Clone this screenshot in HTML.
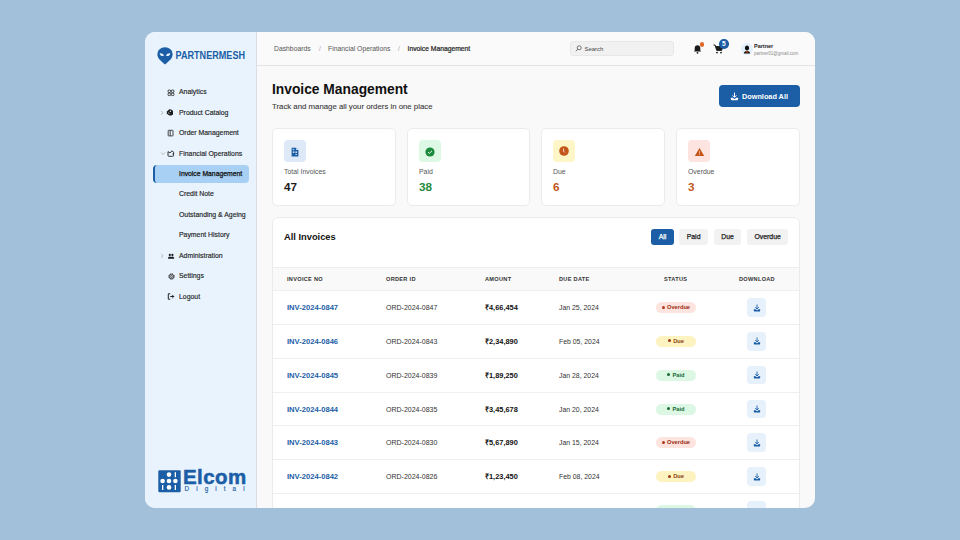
<!DOCTYPE html>
<html><head><meta charset="utf-8">
<style>
*{box-sizing:border-box;margin:0;padding:0}
html,body{width:960px;height:540px;overflow:hidden;background:#a3c0da;font-family:"Liberation Sans",sans-serif;color:#1b1b1b}
.frame{position:absolute;left:145px;top:32px;width:670px;height:476px;border-radius:10px;overflow:hidden;background:#f9f9f9}
.side{position:absolute;left:0;top:0;width:112px;height:476px;background:#e8f3fd;border-right:1px solid #d9dee4}
.abs{position:absolute;white-space:nowrap}
.logo-t{left:30.5px;top:17px;font-size:9.1px;font-weight:700;color:#1b5ea6;line-height:14px;letter-spacing:0;transform:scaleY(1.12);transform-origin:0 100%}
.nav{left:34px;font-size:6.9px;color:#1e1e1e;line-height:10px;-webkit-text-stroke:0.15px #1e1e1e}
.ico{left:21px;width:8px;height:8px}
.chev{left:14px;font-size:6px;color:#888}
.active{position:absolute;left:8px;top:133px;width:96px;height:18px;background:#a8d0f4;border-radius:4px;border-left:2px solid #1b5ea6}
.hdr{position:absolute;left:112px;top:0;width:558px;height:34px;border-bottom:1px solid #e3e3e3;background:#fafafa}
.bc{top:12px;font-size:6.8px;color:#555;line-height:10px}
.main{position:absolute;left:112px;top:34px;width:558px;height:442px}
.card{position:absolute;background:#fff;border:1px solid #ebebeb;border-radius:6px}
.stat{top:62px;width:124px;height:78px;border-radius:5px}
.sico{position:absolute;left:11px;top:11px;width:22px;height:22px;border-radius:4px}
.slab{left:11px;top:38px;font-size:6.9px;color:#555;line-height:10px}
.sval{left:11px;top:51px;font-size:11.7px;font-weight:700;line-height:14px}
.btn{position:absolute;border-radius:3px;font-size:6.9px;font-weight:400;-webkit-text-stroke:0.25px currentColor;text-align:center;line-height:16px;height:16px;top:11px}
.th{top:0;font-size:5.6px;font-weight:700;color:#333;letter-spacing:0.3px;line-height:23px}
.row{position:absolute;left:0;width:528px;height:34px;border-top:1px solid #efefef}
.inv{left:14px;font-size:7.6px;font-weight:700;color:#1b5ea6;line-height:33px}
.ord{left:113px;font-size:7px;color:#333;line-height:33px}
.amt{left:212px;font-size:7.4px;font-weight:700;color:#111;line-height:33px}
.dd{left:286px;font-size:6.9px;color:#333;line-height:33px}
.pill{position:absolute;left:383px;top:11px;width:40px;height:11px;border-radius:6px;font-size:5.7px;font-weight:700;line-height:11px;text-align:center}
.pill i{display:inline-block;width:3px;height:3px;border-radius:50%;vertical-align:middle;margin-right:2px;margin-top:-1px}
.dl{position:absolute;left:474.3px;top:7px;width:18.5px;height:18.7px;border-radius:4px;background:#e6f1fc}
</style></head><body>
<div class="frame">
  <div class="side">
    <svg class="abs" style="left:12px;top:14.5px" width="16" height="18" viewBox="0 0 16 18">
      <path d="M8 0.3C3.8 0.3 0.4 3.4 0.4 7.5c0 3.6 3.6 6.8 7.6 9.9 4-3.1 7.6-6.3 7.6-9.9C15.6 3.4 12.2 0.3 8 0.3z" fill="#1b5ea6"/>
      <path d="M2.6 6.4c1.9-.2 3.6.6 4.3 2.2-.6.6-1.5.6-2.3.3C3.6 8.5 3 7.6 2.6 6.4zM13.4 6.4c-1.9-.2-3.6.6-4.3 2.2.6.6 1.5.6 2.3.3 1-.4 1.6-1.3 2-2.5z" fill="#e8f3fd"/>
    </svg>
    <div class="abs logo-t">PARTNERMESH</div>

    <div class="active"></div>

    <svg class="abs" style="left:21.5px;top:56.5px" width="8" height="8" viewBox="0 0 8 8" fill="none" stroke="#222" stroke-width="0.85"><rect x="1" y="1" width="2.7" height="2.5" rx="1"/><rect x="4.3" y="1" width="2.7" height="2.5" rx="1"/><rect x="1" y="4.1" width="2.7" height="2.5" rx="1"/><rect x="4.3" y="4.1" width="2.7" height="2.5" rx="1"/></svg>
    <svg class="abs" style="left:15px;top:77px" width="5" height="8" viewBox="0 0 5 8" fill="none" stroke="#aaa" stroke-width="0.8"><path d="M1.2 1.9L2.9 3.9 1.2 5.9"/></svg>
    <svg class="abs" style="left:21px;top:76px" width="8" height="8" viewBox="0 0 8 8"><path d="M0.8 3.4L3.4 1.2 5.2 1.6 7 3V6.6L5.4 7.4 3.4 7.6 0.8 5.8z" fill="#1a1a1a"/><circle cx="4.4" cy="3.2" r="0.75" fill="#dfe8f0"/><path d="M1.9 4.6l1.7 1" stroke="#cfd8e0" stroke-width="0.8"/></svg>
    <svg class="abs" style="left:22px;top:97px" width="7" height="8" viewBox="0 0 7 8" fill="none" stroke="#333" stroke-width="0.9"><rect x="1.2" y="1.3" width="4.8" height="5.6" rx="0.4"/><path d="M3.2 1.5v5.2"/></svg>
    <svg class="abs" style="left:14.5px;top:119px" width="6" height="5" viewBox="0 0 6 5" fill="none" stroke="#aaa" stroke-width="0.8"><path d="M1 1.5L3 3.5 5 1.5"/></svg>
    <svg class="abs" style="left:21.5px;top:118px" width="8" height="7" viewBox="0 0 8 7" fill="none" stroke="#222" stroke-width="0.9"><path d="M1 1.6L3 3 4.8 0.9 6 1.6a.9.9 0 0 1 .6.9V5.4a.9.9 0 0 1-.9.9H1.9a.9.9 0 0 1-.9-.9z"/><circle cx="6" cy="3.9" r="0.55" fill="#222" stroke="none"/></svg>
    <svg class="abs" style="left:15px;top:220px" width="5" height="8" viewBox="0 0 5 8" fill="none" stroke="#aaa" stroke-width="0.8"><path d="M1.2 1.9L2.9 3.9 1.2 5.9"/></svg>
    <svg class="abs" style="left:22px;top:220.5px" width="8" height="7" viewBox="0 0 8 7" fill="#1a1a1a"><circle cx="2.8" cy="1.9" r="1.1"/><circle cx="5.4" cy="1.9" r="1.1"/><path d="M1 5.8c0-1.4.8-2.3 1.8-2.3s1.8.9 1.8 2.3zM3.7 5.8c0-1.4.8-2.3 1.7-2.3s1.8.9 1.8 2.3z"/></svg>
    <svg class="abs" style="left:22.5px;top:240.5px" width="7" height="7" viewBox="0 0 7 7" fill="none" stroke="#222"><circle cx="3.5" cy="3.5" r="2.2" stroke-width="0.8"/><circle cx="3.5" cy="3.5" r="2.75" stroke-width="0.9" stroke-dasharray="1.1 1.06"/><circle cx="3.5" cy="3.5" r="0.9" stroke-width="0.7"/></svg>
    <svg class="abs" style="left:22px;top:260.5px" width="8" height="7" viewBox="0 0 8 7" fill="none" stroke="#222" stroke-width="1"><path d="M3.2 0.8H1.3v5.4h1.9"/><path d="M3.2 3.5h3.6M5.2 1.9l1.6 1.6-1.6 1.6"/></svg>
    <div class="abs nav" style="top:55px">Analytics</div>
    <div class="abs nav" style="top:75.5px">Product Catalog</div>
    <div class="abs nav" style="top:96px">Order Management</div>
    <div class="abs nav" style="top:116.5px">Financial Operations</div>
    <div class="abs nav" style="top:137px;font-weight:400;font-size:6.8px;color:#111;-webkit-text-stroke:0.25px #111">Invoice Management</div>
    <div class="abs nav" style="top:157px">Credit Note</div>
    <div class="abs nav" style="top:178px">Outstanding &amp; Ageing</div>
    <div class="abs nav" style="top:198px">Payment History</div>
    <div class="abs nav" style="top:218.5px">Administration</div>
    <div class="abs nav" style="top:239px">Settings</div>
    <div class="abs nav" style="top:259.5px">Logout</div>
    <svg class="abs" style="left:12.5px;top:437.5px" width="23" height="23" viewBox="0 0 23 23"><rect x="0.3" y="0.3" width="22.4" height="22" rx="1.2" fill="#1b5ea6"/>
      <g fill="#fff"><circle cx="11" cy="4.6" r="2.3"/><circle cx="4.6" cy="11" r="2.3"/><circle cx="11" cy="11" r="2.3"/><circle cx="17.4" cy="11" r="2.3"/><circle cx="11" cy="17.4" r="2.3"/>
      <rect x="16.7" y="2.2" width="1.3" height="5"/><rect x="4" y="15" width="1.3" height="5"/><rect x="16.7" y="15" width="1.3" height="5"/></g></svg>
    <div class="abs" style="left:38px;top:433px;font-size:20.5px;font-weight:700;color:#1b5ea6;line-height:24px;letter-spacing:0.4px;-webkit-text-stroke:0.5px #1b5ea6">Elcom</div>
    <div class="abs" style="left:39.5px;top:453px;font-size:6.3px;font-weight:400;color:#1b5ea6;line-height:8px;letter-spacing:7.1px;-webkit-text-stroke:0.15px #1b5ea6">Digital</div>

  </div>

  <div class="hdr">
    <div class="abs bc" style="left:17px">Dashboards</div>
    <div class="abs bc" style="left:62px;color:#aaa">/</div>
    <div class="abs bc" style="left:71px">Financial Operations</div>
    <div class="abs bc" style="left:141px;color:#aaa">/</div>
    <div class="abs bc" style="left:150.5px;color:#222;font-weight:400;font-size:6.75px;-webkit-text-stroke:0.2px #222">Invoice Management</div>
    <div class="abs" style="left:313px;top:9px;width:104px;height:15px;border-radius:3px;background:#f1f1f1;border:1px solid #e8e8e8"></div>
    <div class="abs" style="left:327.5px;top:11.5px;font-size:5.9px;color:#444;line-height:10px">Search</div>
    <svg class="abs" style="left:318px;top:12.5px" width="7" height="7" viewBox="0 0 7 7" fill="none" stroke="#555" stroke-width="0.8"><circle cx="4.2" cy="2.8" r="2"/><path d="M2.8 4.2L0.8 6.2"/></svg>
    <svg class="abs" style="left:436px;top:11.5px" width="9" height="10" viewBox="0 0 9 10" fill="#1a1a1a"><path d="M4.5 1.2c-1.7 0-2.8 1.3-2.8 3v2.3L0.8 7.6h7.4L7.3 6.5V4.2c0-1.7-1.1-3-2.8-3z"/><circle cx="4.5" cy="8.8" r="0.9"/></svg>
    <div class="abs" style="left:442.5px;top:10px;width:4.5px;height:4.5px;border-radius:50%;background:#e0662a"></div>
    <svg class="abs" style="left:456px;top:11.5px" width="10" height="10" viewBox="0 0 10 10" fill="#1a1a1a"><path d="M0.5 1h1.6l1.6 5.4h5L9.6 2.6H2.6" fill="none" stroke="#1a1a1a" stroke-width="1"/><path d="M2.6 2.6h7l-1 3.6H3.6z"/><circle cx="4" cy="8.6" r="0.9"/><circle cx="8" cy="8.6" r="0.9"/></svg>
    <div class="abs" style="left:462px;top:7px;width:9.5px;height:9.5px;border-radius:50%;background:#1b5ea6;color:#fff;font-size:6.5px;font-weight:700;text-align:center;line-height:9.5px">5</div>
    <div class="abs" style="left:484px;top:11px;width:11.5px;height:11.5px;border-radius:50%;background:#e3effb"></div>
    <svg class="abs" style="left:485.5px;top:13px" width="8" height="9" viewBox="0 0 8 9"><path d="M4 0.6c1.3 0 2.1 1 2.1 2.3S5.3 5.4 4 5.4 1.9 4.2 1.9 2.9 2.7 0.6 4 0.6z" fill="#111"/><path d="M0.8 8.6c.4-1.8 1.6-2.8 3.2-2.8s2.8 1 3.2 2.8z" fill="#111"/><path d="M2.4 7c.5.3 1 .4 1.6.4s1.1-.1 1.6-.4l-.3-.8H2.7z" fill="#e25b1e"/></svg>
    <div class="abs" style="left:497px;top:9.7px;font-size:5.5px;font-weight:700;color:#222;line-height:8px">Partner</div>
    <div class="abs" style="left:497px;top:17.8px;font-size:4.5px;color:#8a8a8a;line-height:7px">partner01@gmail.com</div>
  </div>

  <div class="main">
    <div class="abs" style="left:15px;top:15px;font-size:13.8px;font-weight:700;color:#111;line-height:18px">Invoice Management</div>
    <div class="abs" style="left:15px;top:36px;font-size:7.8px;color:#3a3a3a;line-height:10px;-webkit-text-stroke:0.1px #3a3a3a">Track and manage all your orders in one place</div>
    <div class="abs" style="left:462px;top:19px;width:81px;height:22px;border-radius:4px;background:#1b5ea6;color:#fff;font-size:7.3px;font-weight:700;line-height:23px;padding-left:23px">Download All<svg class="abs" style="left:10.5px;top:6.5px" width="9" height="9" viewBox="0 0 9 9" fill="#fff"><path d="M4.5 0.6v4.6M2.6 3.4l1.9 1.9 1.9-1.9" fill="none" stroke="#fff" stroke-width="1"/><path d="M0.6 6.4c.6-.6 1.2-.8 1.6-.8l2.3 1.4 2.3-1.4c.4 0 1 .2 1.6.8L7.6 8.2H1.4z"/></svg></div>

    <div class="card stat" style="left:15px">
      <div class="sico" style="background:#dde9f7"><svg class="abs" style="left:7px;top:6.5px" width="8" height="10" viewBox="0 0 8 10"><path d="M0.6 0.8h4.6L7.4 3v6.4H0.6z" fill="#1b5ea6"/><path d="M5.2 0.8V3h2.2" fill="#dde9f7"/><rect x="1.8" y="4.4" width="1.6" height="1.6" fill="#c9dcf2"/><rect x="4.4" y="4.4" width="1.6" height="1.6" fill="#c9dcf2"/><rect x="4.4" y="7" width="1.6" height="0.9" fill="#c9dcf2"/><rect x="1.8" y="2" width="1.4" height="1.2" fill="#c9dcf2"/></svg></div>
      <div class="abs slab">Total Invoices</div>
      <div class="abs sval">47</div>
    </div>
    <div class="card stat" style="left:150px;width:123px">
      <div class="sico" style="background:#ddf9e6"><svg class="abs" style="left:6.3px;top:6.5px" width="10" height="10" viewBox="0 0 10 10"><circle cx="5" cy="5" r="4.6" fill="#1b8a3c"/><path d="M3 5.1l1.4 1.3 2.6-2.6" fill="none" stroke="#fff" stroke-width="0.9"/></svg></div>
      <div class="abs slab">Paid</div>
      <div class="abs sval" style="color:#1f8a3c">38</div>
    </div>
    <div class="card stat" style="left:284px">
      <div class="sico" style="background:#fef6c6"><svg class="abs" style="left:6px;top:6.3px" width="10" height="10" viewBox="0 0 10 10"><circle cx="5" cy="5" r="4.8" fill="#c4561a"/><path d="M4.6 2.6v2.6l1.3 1.3" fill="none" stroke="#fff" stroke-width="0.8"/></svg></div>
      <div class="abs slab">Due</div>
      <div class="abs sval" style="color:#c2571a">6</div>
    </div>
    <div class="card stat" style="left:419px">
      <div class="sico" style="background:#fde4e1"><svg class="abs" style="left:6px;top:6.5px" width="11" height="10" viewBox="0 0 11 10"><path d="M5.5 1L10.2 9H0.8z" fill="#c4561a"/><rect x="5" y="4" width="1" height="2.4" fill="#f3b8a0"/><rect x="5" y="7" width="1" height="0.9" fill="#f3b8a0"/></svg></div>
      <div class="abs slab">Overdue</div>
      <div class="abs sval" style="color:#c2571a">3</div>
    </div>

    <div class="card" style="left:15px;top:151px;width:528px;height:320px;overflow:hidden">
      <div class="abs" style="left:11px;top:13px;font-size:9.3px;font-weight:700;color:#111;line-height:12px">All Invoices</div>
      <div class="btn" style="left:378px;width:23px;background:#1b5ea6;color:#fff">All</div>
      <div class="btn" style="left:406.3px;width:28.6px;background:#f2f2f2;color:#222">Paid</div>
      <div class="btn" style="left:441px;width:27px;background:#f2f2f2;color:#222">Due</div>
      <div class="btn" style="left:474px;width:41.3px;background:#f2f2f2;color:#222">Overdue</div>

      <div class="abs" style="left:0;top:49px;width:528px;height:23px;background:#f9f9f9;border-top:1px solid #eee">
        <div class="abs th" style="left:14px">INVOICE NO</div>
        <div class="abs th" style="left:113px">ORDER ID</div>
        <div class="abs th" style="left:212px">AMOUNT</div>
        <div class="abs th" style="left:286px">DUE DATE</div>
        <div class="abs th" style="left:391px">STATUS</div>
        <div class="abs th" style="left:466px">DOWNLOAD</div>
      </div>
            <div class="row" style="top:72.00px">
        <div class="abs inv">INV-2024-0847</div><div class="abs ord">ORD-2024-0847</div><div class="abs amt">₹4,66,454</div><div class="abs dd">Jan 25, 2024</div>
        <div class="pill" style="background:#fde4df;color:#9b2c12"><i style="background:#b7361a"></i>Overdue</div>
        <div class="dl"><svg class="abs" style="left:5.5px;top:5.5px" width="8" height="8" viewBox="0 0 8 8"><path d="M4 0.5v4.5M2.2 3.2L4 5l1.8-1.8" fill="none" stroke="#1b5ea6" stroke-width="0.9"/><path d="M0.6 5.8c.5-.5 1-.7 1.4-.7L4 6.3l2-1.2c.4 0 .9.2 1.4.7l-.6 1.6H1.2z" fill="#1b5ea6"/></svg></div>
      </div>
      <div class="row" style="top:105.87px">
        <div class="abs inv">INV-2024-0846</div><div class="abs ord">ORD-2024-0843</div><div class="abs amt">₹2,34,890</div><div class="abs dd">Feb 05, 2024</div>
        <div class="pill" style="background:#fdf3c0;color:#8b3d10"><i style="background:#9b3a12"></i>Due</div>
        <div class="dl"><svg class="abs" style="left:5.5px;top:5.5px" width="8" height="8" viewBox="0 0 8 8"><path d="M4 0.5v4.5M2.2 3.2L4 5l1.8-1.8" fill="none" stroke="#1b5ea6" stroke-width="0.9"/><path d="M0.6 5.8c.5-.5 1-.7 1.4-.7L4 6.3l2-1.2c.4 0 .9.2 1.4.7l-.6 1.6H1.2z" fill="#1b5ea6"/></svg></div>
      </div>
      <div class="row" style="top:139.74px">
        <div class="abs inv">INV-2024-0845</div><div class="abs ord">ORD-2024-0839</div><div class="abs amt">₹1,89,250</div><div class="abs dd">Jan 28, 2024</div>
        <div class="pill" style="background:#dcf7e3;color:#166a33"><i style="background:#1d6b37"></i>Paid</div>
        <div class="dl"><svg class="abs" style="left:5.5px;top:5.5px" width="8" height="8" viewBox="0 0 8 8"><path d="M4 0.5v4.5M2.2 3.2L4 5l1.8-1.8" fill="none" stroke="#1b5ea6" stroke-width="0.9"/><path d="M0.6 5.8c.5-.5 1-.7 1.4-.7L4 6.3l2-1.2c.4 0 .9.2 1.4.7l-.6 1.6H1.2z" fill="#1b5ea6"/></svg></div>
      </div>
      <div class="row" style="top:173.61px">
        <div class="abs inv">INV-2024-0844</div><div class="abs ord">ORD-2024-0835</div><div class="abs amt">₹3,45,678</div><div class="abs dd">Jan 20, 2024</div>
        <div class="pill" style="background:#dcf7e3;color:#166a33"><i style="background:#1d6b37"></i>Paid</div>
        <div class="dl"><svg class="abs" style="left:5.5px;top:5.5px" width="8" height="8" viewBox="0 0 8 8"><path d="M4 0.5v4.5M2.2 3.2L4 5l1.8-1.8" fill="none" stroke="#1b5ea6" stroke-width="0.9"/><path d="M0.6 5.8c.5-.5 1-.7 1.4-.7L4 6.3l2-1.2c.4 0 .9.2 1.4.7l-.6 1.6H1.2z" fill="#1b5ea6"/></svg></div>
      </div>
      <div class="row" style="top:207.48px">
        <div class="abs inv">INV-2024-0843</div><div class="abs ord">ORD-2024-0830</div><div class="abs amt">₹5,67,890</div><div class="abs dd">Jan 15, 2024</div>
        <div class="pill" style="background:#fde4df;color:#9b2c12"><i style="background:#b7361a"></i>Overdue</div>
        <div class="dl"><svg class="abs" style="left:5.5px;top:5.5px" width="8" height="8" viewBox="0 0 8 8"><path d="M4 0.5v4.5M2.2 3.2L4 5l1.8-1.8" fill="none" stroke="#1b5ea6" stroke-width="0.9"/><path d="M0.6 5.8c.5-.5 1-.7 1.4-.7L4 6.3l2-1.2c.4 0 .9.2 1.4.7l-.6 1.6H1.2z" fill="#1b5ea6"/></svg></div>
      </div>
      <div class="row" style="top:241.35px">
        <div class="abs inv">INV-2024-0842</div><div class="abs ord">ORD-2024-0826</div><div class="abs amt">₹1,23,450</div><div class="abs dd">Feb 08, 2024</div>
        <div class="pill" style="background:#fdf3c0;color:#8b3d10"><i style="background:#9b3a12"></i>Due</div>
        <div class="dl"><svg class="abs" style="left:5.5px;top:5.5px" width="8" height="8" viewBox="0 0 8 8"><path d="M4 0.5v4.5M2.2 3.2L4 5l1.8-1.8" fill="none" stroke="#1b5ea6" stroke-width="0.9"/><path d="M0.6 5.8c.5-.5 1-.7 1.4-.7L4 6.3l2-1.2c.4 0 .9.2 1.4.7l-.6 1.6H1.2z" fill="#1b5ea6"/></svg></div>
      </div>
      <div class="row" style="top:275.22px">
        <div class="pill" style="background:#dcf7e3;color:#166a33"></div>
        <div class="dl"></div>
      </div>
    </div>
  </div>
</div>
</body></html>
